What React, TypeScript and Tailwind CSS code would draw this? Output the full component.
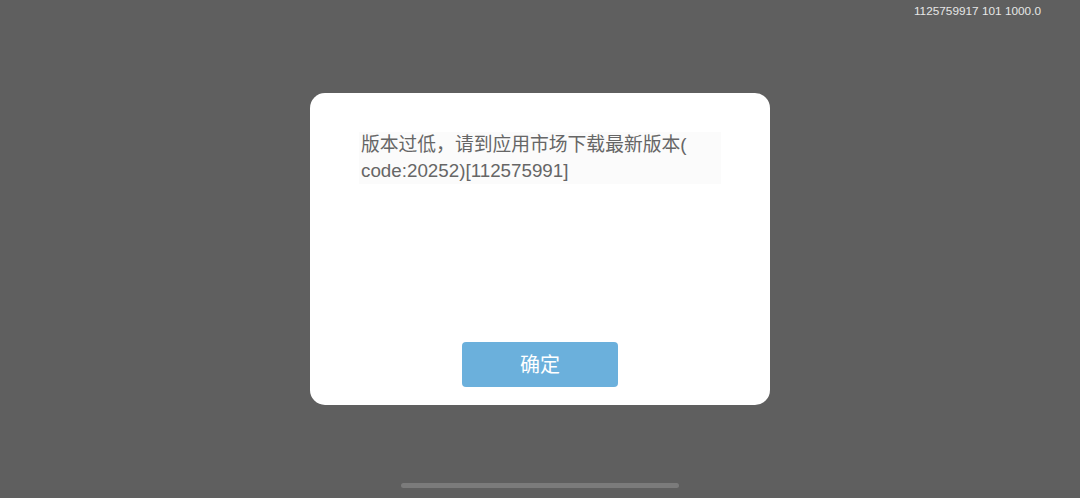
export default function App() {
  return (
    <div
      className="relative flex h-[498px] w-full items-center justify-center bg-[#5f5f5f]"
      style={{ fontFamily: '"Liberation Sans", "Noto Sans CJK SC", sans-serif' }}
    >
      {/* debug info */}
      <div className="absolute right-[39px] top-[3px] text-[11.8px] leading-[16px] text-[#e6e6e6]">
        1125759917 101 1000.0
      </div>

      {/* Dialog */}
      <div className="flex h-[312px] w-[460px] flex-col items-center justify-between rounded-[15px] bg-white pb-[18px] pt-[39px]">
        <div className="w-[362px] bg-[#fbfbfb] px-[2px] text-[18.8px] leading-[26px] text-[#666666]">
          版本过低，请到应用市场下载最新版本(
          <br />
          code:20252)[112575991]
        </div>
        <button className="flex h-[45px] w-[156px] items-center justify-center rounded-[4px] bg-[#6bb0dc] text-[20px] text-white">
          确定
        </button>
      </div>

      {/* Home indicator */}
      <div className="absolute bottom-[10px] left-[401px] h-[5px] w-[278px] rounded-full bg-[#7b7b7b]" />
    </div>
  )
}
